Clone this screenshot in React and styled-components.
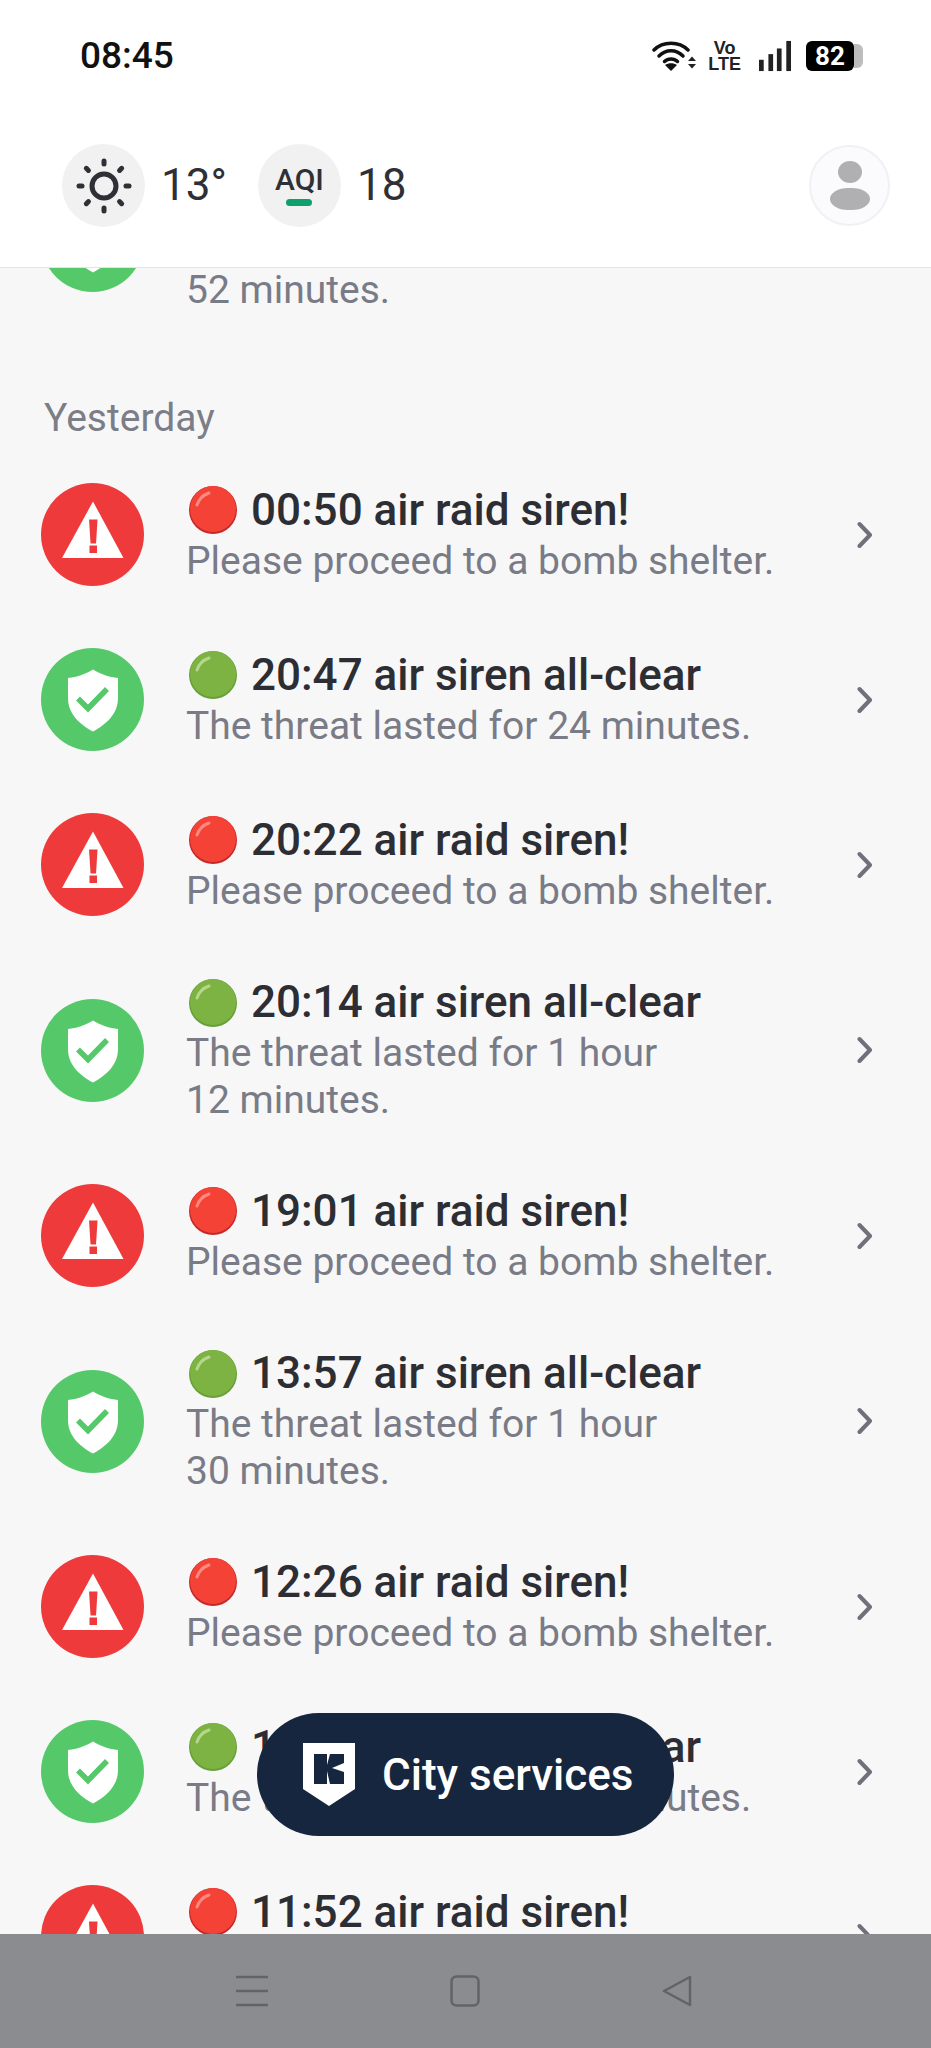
import React from "react";
import styled, { createGlobalStyle } from "styled-components";

const GlobalStyle = createGlobalStyle`
  html, body {
    margin: 0;
    padding: 0;
    background: #f7f7f8;
    font-family: Roboto, "Liberation Sans", sans-serif;
  }
`;

const Screen = styled.div`
  position: relative;
  width: 931px;
  height: 2048px;
  display: flex;
  flex-direction: column;
  overflow: hidden;
  background: #f7f7f8;
`;

const Top = styled.header`
  flex: none;
  height: 267px;
  background: #fff;
  border-bottom: 1px solid #e4e4e6;
  box-sizing: content-box;
`;

const StatusBar = styled.div`
  height: 144px;
  box-sizing: border-box;
  padding: 37px 68px 0 80px;
  display: flex;
  justify-content: space-between;
  align-items: flex-start;
`;

const Time = styled.span`
  font-size: 37px;
  line-height: 38px;
  font-weight: 500;
  color: #111;
`;

const StatusIcons = styled.div`
  display: flex;
  align-items: center;
  gap: 15px;
  height: 38px;
`;

const VoLte = styled.span`
  display: flex;
  flex-direction: column;
  align-items: center;
  margin: 0 3px 0 -3px;
  font-family: "Liberation Sans", sans-serif;
  font-size: 18px;
  line-height: 16px;
  font-weight: 700;
  color: #222;
`;

const Battery = styled.span`
  position: relative;
  width: 48px;
  height: 30px;
  margin-right: 9px;
  border-radius: 6px;
  background: #000;
  color: #fff;
  font-size: 26px;
  line-height: 30px;
  font-weight: 700;
  text-align: center;

  &::after {
    content: "";
    position: absolute;
    left: 48px;
    top: 3px;
    width: 9px;
    height: 24px;
    border-radius: 0 6px 6px 0;
    background: #bdbdbd;
  }
`;

const WeatherBar = styled.div`
  height: 83px;
  padding: 0 41px 0 62px;
  display: flex;
  align-items: center;
`;

const Badge = styled.div`
  width: 83px;
  height: 83px;
  flex: none;
  border-radius: 50%;
  background: #f1f1f2;
  display: flex;
  flex-direction: column;
  align-items: center;
  justify-content: center;
`;

const Reading = styled.span`
  margin: 0 31px 0 16px;
  font-size: 44px;
  line-height: 85px;
  color: #2f3035;
`;

const AqiLabel = styled.span`
  font-size: 30px;
  line-height: 28px;
  font-weight: 500;
  color: #2f3035;
  margin-top: 1px;
`;

const AqiBar = styled.span`
  width: 26px;
  height: 7px;
  margin-top: 5px;
  border-radius: 4px;
  background: #0ea06c;
`;

const Avatar = styled.div`
  margin-left: auto;
  width: 81px;
  height: 81px;
  box-sizing: border-box;
  border-radius: 50%;
  background: #fbfbfd;
  border: 2px solid #f0f1f4;
  display: flex;
  align-items: center;
  justify-content: center;
`;

const Viewport = styled.main`
  flex: 1;
  min-height: 0;
  overflow: hidden;
`;

const Feed = styled.div`
  margin-top: -131px;
`;

const SectionLabel = styled.div`
  height: 109px;
  box-sizing: border-box;
  padding: 53px 0 0 44px;
  font-size: 39px;
  line-height: 44px;
  color: #7b7d87;
`;

const Row = styled.div`
  display: flex;
  align-items: center;
  gap: 42px;
  padding: 30px 58px 30px 41px;
`;

const Disc = styled.svg`
  flex: none;
  width: 103px;
  height: 103px;
  margin: 1px 0;
`;

const Body = styled.div`
  flex: 1;
  min-width: 0;
`;

const Title = styled.div`
  display: flex;
  align-items: center;
  gap: 13px;
  height: 53px;
  box-sizing: border-box;
  padding: 0 0 2px 2px;
  font-size: 44px;
  line-height: 51px;
  font-weight: 500;
  color: #2d2e33;
  white-space: nowrap;
`;

const Sub = styled.div`
  font-size: 39px;
  line-height: 46.5px;
  color: #797b86;
  white-space: nowrap;
`;

const Chevron = styled.svg`
  flex: none;
  width: 16px;
  height: 28px;
`;

const CityButton = styled.div`
  position: absolute;
  left: 257px;
  top: 1713px;
  width: 417px;
  height: 123px;
  box-sizing: border-box;
  padding-left: 46px;
  border-radius: 62px;
  background: #17263f;
  display: flex;
  align-items: center;
  gap: 27px;
  color: #fff;
  font-size: 44px;
  font-weight: 500;
`;

const NavBar = styled.nav`
  flex: none;
  height: 114px;
  background: #8b8c90;
  position: relative;
  z-index: 1;
  display: flex;
  align-items: center;
  justify-content: center;
  gap: 182px;
  padding-right: 4px;
  box-sizing: border-box;
`;

const rays = [0, 45, 90, 135, 180, 225, 270, 315];

const SunIcon = () => (
  <svg width="56" height="56" viewBox="0 0 56 56" fill="none">
    <circle cx="28" cy="28" r="12" stroke="#2f3035" strokeWidth="5" />
    {rays.map((a) => (
      <line
        key={a}
        x1="28"
        y1="3"
        x2="28"
        y2="6"
        stroke="#2f3035"
        strokeWidth="5"
        strokeLinecap="round"
        transform={`rotate(${a} 28 28)`}
      />
    ))}
  </svg>
);

const WifiIcon = () => (
  <svg width="44" height="32" viewBox="0 0 44 32" fill="none">
    <path d="M2 10 C11 1 27 1 36 10" stroke="#111" strokeWidth="3.5" strokeLinecap="round" />
    <path d="M7 16 C14 9 24 9 31 16" stroke="#111" strokeWidth="3.5" strokeLinecap="round" />
    <path d="M12.5 21.5 C16 18 22 18 25.5 21.5" stroke="#111" strokeWidth="3.5" strokeLinecap="round" />
    <path d="M13 25 C16.500 22.500 21.500 22.500 25 25 L19 31 Z" fill="#111" />
    <path d="M36 21 L40 16.500 L44 21 Z M36 24 L44 24 L40 28.500 Z" fill="#222" />
  </svg>
);

const SignalIcon = () => (
  <svg width="32" height="32" viewBox="0 0 34 32" fill="#222">
    <rect x="0" y="20" width="5" height="12" />
    <rect x="10" y="14" width="5" height="18" />
    <rect x="19" y="8" width="5" height="24" />
    <rect x="29" y="0" width="5" height="32" />
  </svg>
);

const AvatarIcon = () => (
  <svg width="40" height="50" viewBox="0 0 40 50" fill="#b0b0b2">
    <ellipse cx="20" cy="11" rx="12" ry="11" />
    <rect x="0" y="27" width="40" height="22" rx="18" ry="11" />
  </svg>
);

const AlertDisc = () => (
  <Disc viewBox="0 0 103 103">
    <circle cx="51.500" cy="51.500" r="51.500" fill="#ee3a3b" />
    <path d="M52 18.500 L82.500 75 L21 75 Z" fill="#fff" />
    <path d="M48 36.500 H56.500 L55 60.500 H49.500 Z" fill="#ee3a3b" />
    <rect x="48.500" y="62.500" width="7.500" height="7.500" fill="#ee3a3b" />
  </Disc>
);

const ShieldDisc = () => (
  <Disc viewBox="0 0 103 103">
    <circle cx="51.500" cy="51.500" r="51.500" fill="#55c96a" />
    <path
      d="M52 21.500 C60 26.500 68 29 77 30 V50 C77 66 65 76.500 52 83.500 C39 76.500 27 66 27 50 V30 C36 29 44 26.500 52 21.500 Z"
      fill="#fff"
    />
    <path d="M37 50.500 L47 60.500 L66 41" fill="none" stroke="#55c96a" strokeWidth="5.500" />
  </Disc>
);

const Ball = ({ kind }) => {
  const alert = kind === "alert";
  return (
    <svg width="50" height="50" viewBox="0 0 50 50" style={{ flex: "none" }}>
      <circle cx="25" cy="25" r="24" fill={alert ? "#c62828" : "#689f38"} />
      <circle cx="25" cy="24" r="23" fill={alert ? "#f44336" : "#7cb342"} />
      <path
        d="M9 20 C11 14 15 10 21 8"
        fill="none"
        stroke={alert ? "#ff8a80" : "#b7d68c"}
        strokeWidth="3"
        strokeLinecap="round"
      />
    </svg>
  );
};

const KyivLogo = () => (
  <svg width="52" height="63" viewBox="0 0 52 63">
    <path d="M0 0 H52 V46 L26 63 L0 46 Z" fill="#fff" />
    <path
      d="M11 11 H24 V22 L27 11 H41 V20 L29 25 L41 29 V41 H27 L24 28 V41 H11 Z"
      fill="#17263f"
    />
  </svg>
);

const siren = (time) => ({
  kind: "alert",
  title: `${time} air raid siren!`,
  lines: ["Please proceed to a bomb shelter."],
});

const clear = (time, ...lines) => ({
  kind: "clear",
  title: `${time} air siren all-clear`,
  lines,
});

const earlier = clear("08:12", "The threat lasted for 1 hour", "52 minutes.");

const yesterday = [
  siren("00:50"),
  clear("20:47", "The threat lasted for 24 minutes."),
  siren("20:22"),
  clear("20:14", "The threat lasted for 1 hour", "12 minutes."),
  siren("19:01"),
  clear("13:57", "The threat lasted for 1 hour", "30 minutes."),
  siren("12:26"),
  clear("11:59", "The threat lasted for 27 minutes."),
  siren("11:52"),
];

const Notice = ({ item }) => (
  <Row>
    {item.kind === "alert" ? <AlertDisc /> : <ShieldDisc />}
    <Body>
      <Title>
        <Ball kind={item.kind} />
        {item.title}
      </Title>
      {item.lines.map((line) => (
        <Sub key={line}>{line}</Sub>
      ))}
    </Body>
    <Chevron viewBox="0 0 16 28" fill="none">
      <path d="M2.500 3 L13 14 L2.500 25" stroke="#6f7079" strokeWidth="4" strokeLinecap="round" strokeLinejoin="round" />
    </Chevron>
  </Row>
);

export default function App() {
  return (
    <Screen>
      <GlobalStyle />
      <Top>
        <StatusBar>
          <Time>08:45</Time>
          <StatusIcons>
            <WifiIcon />
            <VoLte>
              <span>Vo</span>
              <span>LTE</span>
            </VoLte>
            <SignalIcon />
            <Battery>82</Battery>
          </StatusIcons>
        </StatusBar>
        <WeatherBar>
          <Badge>
            <SunIcon />
          </Badge>
          <Reading>13°</Reading>
          <Badge>
            <AqiLabel>AQI</AqiLabel>
            <AqiBar />
          </Badge>
          <Reading>18</Reading>
          <Avatar>
            <AvatarIcon />
          </Avatar>
        </WeatherBar>
      </Top>
      <Viewport>
        <Feed>
          <Notice item={earlier} />
          <SectionLabel>Yesterday</SectionLabel>
          {yesterday.map((item) => (
            <Notice key={item.title} item={item} />
          ))}
        </Feed>
      </Viewport>
      <CityButton>
        <KyivLogo />
        City services
      </CityButton>
      <NavBar>
        <svg width="32" height="32" viewBox="0 0 32 32" stroke="#626368" strokeWidth="2.500">
          <path d="M0 2 H32 M0 16 H32 M0 30 H32" />
        </svg>
        <svg width="30" height="32" viewBox="0 0 30 32" fill="none" stroke="#626368" strokeWidth="2.500">
          <rect x="1.500" y="1.500" width="27" height="29" rx="5" />
        </svg>
        <svg width="30" height="32" viewBox="0 0 30 32" fill="none" stroke="#626368" strokeWidth="2.500" strokeLinejoin="round">
          <path d="M28 2 V30 L2 16 Z" />
        </svg>
      </NavBar>
    </Screen>
  );
}
